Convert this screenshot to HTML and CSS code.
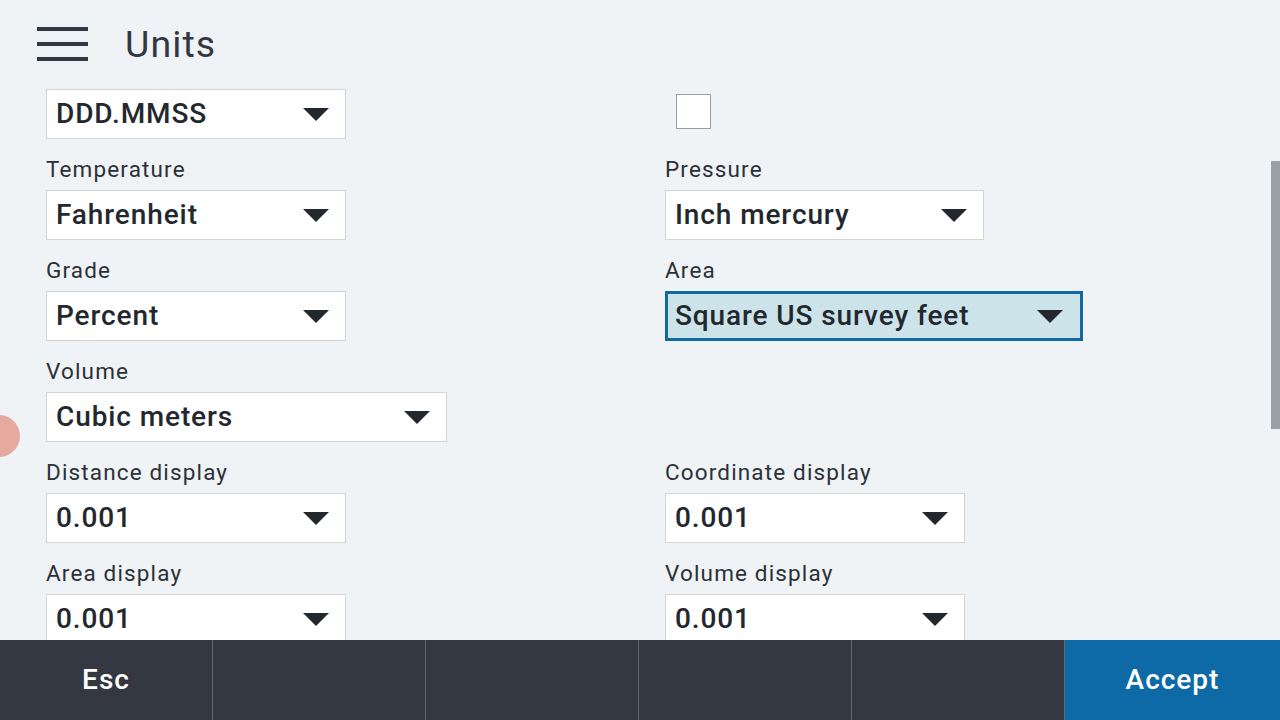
FILE: index.html
```html
<!DOCTYPE html>
<html>
<head>
<meta charset="utf-8">
<link rel="stylesheet" href="styles.css">
</head>
<body>
<div class="app">
  <header class="header">
    <svg class="menu" width="51" height="34" viewBox="0 0 51 34"><rect x="0" y="0" width="51" height="4" fill="#323843"/><rect x="0" y="15" width="51" height="4" fill="#323843"/><rect x="0" y="30" width="51" height="4" fill="#323843"/></svg>
    <h1 class="title">Units</h1>
  </header>
  <main class="content">
    <div class="grid">
      <div class="field first">
        <div class="select w300"><span>DDD.MMSS</span><i class="caret"></i></div>
      </div>
      <div class="field first">
        <div class="check"></div>
      </div>

      <div class="field">
        <div class="label">Temperature</div>
        <div class="select w300"><span>Fahrenheit</span><i class="caret"></i></div>
      </div>
      <div class="field">
        <div class="label">Pressure</div>
        <div class="select w319"><span>Inch mercury</span><i class="caret"></i></div>
      </div>

      <div class="field">
        <div class="label">Grade</div>
        <div class="select w300"><span>Percent</span><i class="caret"></i></div>
      </div>
      <div class="field">
        <div class="label">Area</div>
        <div class="select w418 active"><span>Square US survey feet</span><i class="caret"></i></div>
      </div>

      <div class="field">
        <div class="label">Volume</div>
        <div class="select w401"><span>Cubic meters</span><i class="caret"></i></div>
      </div>
      <div class="field"></div>

      <div class="field">
        <div class="label">Distance display</div>
        <div class="select w300"><span>0.001</span><i class="caret"></i></div>
      </div>
      <div class="field">
        <div class="label">Coordinate display</div>
        <div class="select w300"><span>0.001</span><i class="caret"></i></div>
      </div>

      <div class="field">
        <div class="label">Area display</div>
        <div class="select w300"><span>0.001</span><i class="caret"></i></div>
      </div>
      <div class="field">
        <div class="label">Volume display</div>
        <div class="select w300"><span>0.001</span><i class="caret"></i></div>
      </div>
    </div>
    <div class="scrollbar"></div>
    <div class="touch"></div>
  </main>
  <footer class="footer">
    <button class="fbtn">Esc</button>
    <button class="fbtn"></button>
    <button class="fbtn"></button>
    <button class="fbtn"></button>
    <button class="fbtn"></button>
    <button class="fbtn accept">Accept</button>
  </footer>
</div>
</body>
</html>
```

FILE: styles.css
```css
* { box-sizing: border-box; }
html, body { margin: 0; padding: 0; }
body {
  width: 1280px;
  height: 720px;
  overflow: hidden;
  background: #eff3f5;
  font-family: Roboto, "Liberation Sans", sans-serif;
  color: #262a31;
}
.app {
  display: flex;
  flex-direction: column;
  height: 720px;
}
.header {
  height: 89px;
  flex: none;
  display: flex;
  align-items: flex-start;
  padding-left: 37px;
}
.menu {
  margin-top: 27px;
  display: block;
}
.title {
  margin: 0 0 0 37px;
  font-size: 37.5px;
  font-weight: 400;
  letter-spacing: 1.1px;
  line-height: 42px;
  margin-top: 23px;
  color: #323843;
}
.content {
  position: relative;
  flex: 1;
  overflow: hidden;
  padding-left: 46px;
}
.grid {
  display: grid;
  grid-template-columns: 619px 1fr;
}
.field {
  display: flex;
  flex-direction: column;
  align-items: flex-start;
}
.label {
  margin-top: 16px;
  height: 28px;
  line-height: 28px;
  margin-bottom: 7px;
  font-size: 22.5px;
  letter-spacing: 1.15px;
  color: #2b3038;
}
.select {
  height: 50px;
  background: #fff;
  border: 1px solid #d2d5d8;
  display: flex;
  align-items: center;
  justify-content: space-between;
  padding: 0 16px 0 9px;
  font-size: 28px;
  font-weight: 500;
  letter-spacing: 0.9px;
  color: #23272e;
}
.select span { line-height: 48px; }
.select.active {
  border: 3px solid #106a9f;
  background: #cce3ea;
  padding-left: 7px;
  padding-right: 17px;
}
.caret {
  display: block;
  width: 0;
  height: 0;
  border-left: 13px solid transparent;
  border-right: 13px solid transparent;
  border-top: 13px solid #23272e;
  margin-top: 1px;
}
.w300 { width: 300px; }
.w319 { width: 319px; }
.w401 { width: 401px; }
.w418 { width: 418px; }
.check {
  width: 35px;
  height: 35px;
  margin: 5px 0 0 11px;
  background: #fff;
  border: 1px solid #9a9ea2;
}
.scrollbar {
  position: absolute;
  right: 0;
  top: 72px;
  width: 9px;
  height: 268px;
  background: #9aa0a4;
}
.touch {
  position: absolute;
  left: -22px;
  top: 326px;
  width: 42px;
  height: 42px;
  border-radius: 50%;
  background: rgba(228, 150, 138, 0.8);
}
.footer {
  height: 80px;
  flex: none;
  display: grid;
  grid-template-columns: repeat(5, 212px) 1fr;
  column-gap: 1px;
  background: #62676f;
}
.fbtn {
  border: 0;
  margin: 0;
  background: #343843;
  color: #fff;
  font-family: Roboto, "Liberation Sans", sans-serif;
  font-size: 28px;
  font-weight: 500;
  letter-spacing: 1px;
  padding: 0 0 2px 0;
}
.fbtn.accept {
  background: #0d6aa6;
}
```
